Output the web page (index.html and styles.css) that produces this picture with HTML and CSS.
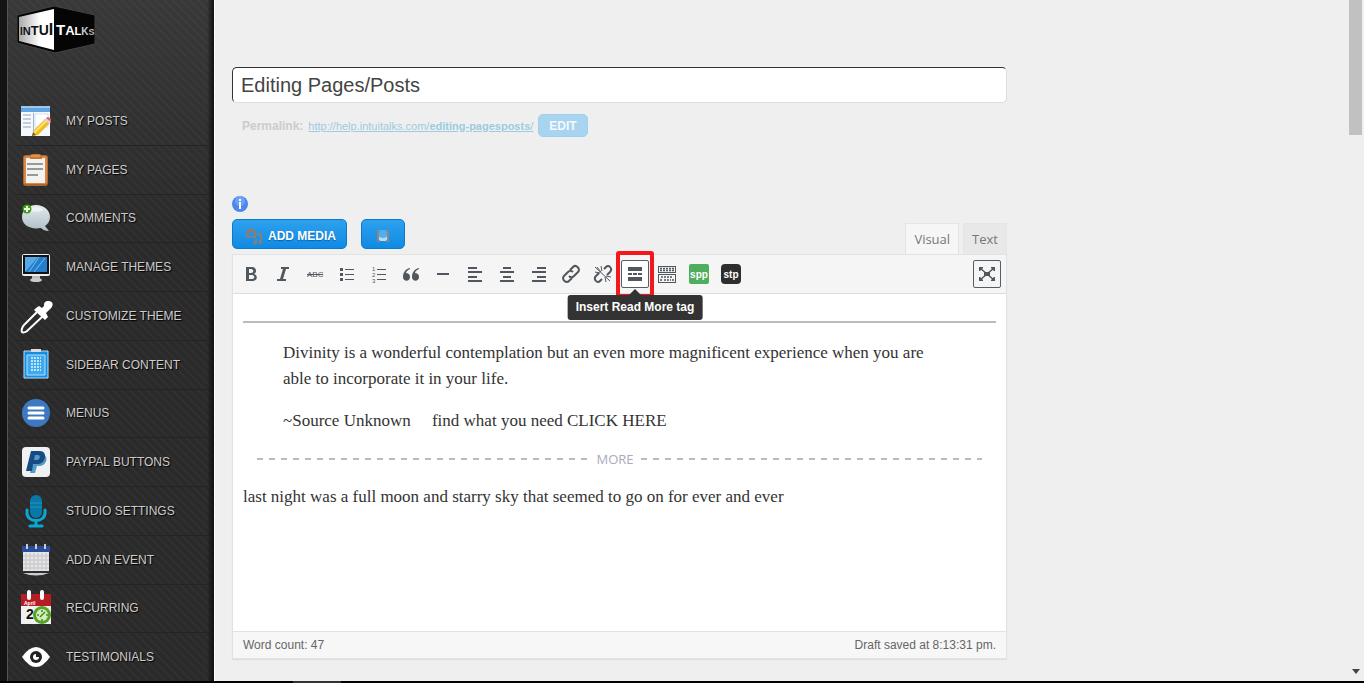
FILE: index.html
```html
<!DOCTYPE html>
<html lang="en">
<head>
<meta charset="utf-8">
<title>Editing Pages/Posts</title>
<link rel="stylesheet" href="styles.css">
</head>
<body>
<div class="app">
  <aside class="sidebar">
    <a class="logo" href="#" aria-label="IntuiTalks">
      <svg width="78" height="48" viewBox="0 0 78 48">
        <defs><linearGradient id="face"><stop stop-color="#aaa"/><stop offset=".6" stop-color="#fff"/></linearGradient></defs>
        <path d="M0 9 37 0 78 9V38L38 47 0 37Z" fill="#050505" stroke="#444" stroke-width="1"/>
        <path d="M2 11 37 3V44L2 35Z" fill="url(#face)"/>
        <text class="logo-text" x="3" y="29" fill="#111"><tspan font-size="10">I</tspan><tspan font-size="11">N</tspan><tspan font-size="13">T</tspan><tspan font-size="14">U</tspan><tspan font-size="16">I</tspan></text>
        <text class="logo-text" x="39" y="29" fill="#fff"><tspan font-size="15">T</tspan><tspan font-size="13">A</tspan><tspan font-size="11">L</tspan><tspan font-size="10" fill="#ccc">K</tspan><tspan font-size="9" fill="#bbb">S</tspan></text>
      </svg>
    </a>
    <nav class="menu">
      <a href="#"><svg viewBox="0 0 32 32"><path d="M1 1h29v30H1z" fill="#f5f9fd"/><path d="M1 1h29v6H1z" fill="#62a5e0"/><path d="M1 1h29v2H1z" fill="#9bcaf0"/><path d="M13 8h1v22h-1z" fill="#9bb6ce"/><path d="M15 9h13v13H15z" fill="#fff" stroke="#d5e1ec"/><path d="M3 10h8M3 14h8M3 18h8M3 22h8" stroke="#8ea2b5"/><path d="m12 31 2-6L25 14l5 4-12 12z" fill="#f1bd23"/><path d="m14 28 13-13" stroke="#ffe36b" stroke-width="2"/><path d="m24 15 2-2 5 4-2 2z" fill="#d5d5d5"/><path d="m26 13 2-1 3 2v3z" fill="#e8596a"/><path d="m12 31 1-4 3 3z" fill="#775a2c"/></svg>MY POSTS</a>
      <a href="#"><svg viewBox="0 0 32 32"><rect x="3" y="1" width="25" height="31" rx="3" fill="#b26529"/><rect x="4" y="2" width="23" height="28" rx="2" fill="#d5884a"/><path d="M6 4h19v25H6z" fill="#f2f2f0"/><path d="M10 3q0-3 3-3h5q4 0 4 3v2H10z" fill="#c9772f"/><path d="M11 2h9" stroke="#edb07a"/><path d="M7 10h16M7 15h16M7 21h11" stroke="#999" stroke-width="2"/></svg>MY PAGES</a>
      <a href="#"><svg viewBox="0 0 32 32"><defs><linearGradient id="bubble" x2="0" y2="1"><stop stop-color="#e3ebee"/><stop offset="1" stop-color="#aebdc5"/></linearGradient></defs><path d="M16 3c8 0 14 5 14 12 0 4-2 7-5 9l4 5c-4 0-6-1-8-3C10 28 2 23 2 15 2 8 8 3 16 3z" fill="url(#bubble)"/><path d="M7 8q9-6 17 0-8 4-17 0z" fill="#fff" opacity=".5"/><circle cx="7" cy="7" r="4.500" fill="#419d16"/><path d="M7 4v6M4 7h6" stroke="#eaffdc" stroke-width="2"/></svg>COMMENTS</a>
      <a href="#"><svg viewBox="0 0 32 32"><rect x="2" y="3" width="28" height="22" rx="2" fill="#eee"/><path d="M3 4h26v19H3z" fill="#111"/><path d="M5 6h22v15H5z" fill="#237fcb"/><path d="M5 6h13L6 20H5z" fill="#56aae7"/><path d="M19 6 9 21M25 7 14 21" stroke="#74bdee"/><path d="M12 25h8v3H12z" fill="#bbb"/><ellipse cx="16" cy="29" rx="6" ry="2" fill="#ccc"/></svg>MANAGE THEMES</a>
      <a href="#"><svg viewBox="0 0 32 32"><path d="M18 11 4 25c-2 2-3 6-2 7s5 0 6-2l15-14" fill="none" stroke="#fff" stroke-width="2"/><path d="m16 8 3-2 3 2 5-5c4-4 8 1 4 5l-5 5 2 4-3 3L14 10z" fill="#fff"/><circle cx="28" cy="5" r="4" fill="#fff"/></svg>CUSTOMIZE THEME</a>
      <a href="#"><svg viewBox="0 0 32 32"><path d="M4 2h24v27H4z" fill="#168de1"/><path d="M4 2h24v27H4z" fill="none" stroke="#b4e3fc" stroke-width="1"/><path d="M7 6h18v20H7z" fill="#42a8ed" stroke="#b4e3fc"/><path d="M11 9h10M11 12h10M11 15h10M11 18h10M11 21h10" stroke="#b9e7ff" stroke-width="2" stroke-dasharray="2 1"/><path d="M11 0h10v3H11z" fill="#ddd"/></svg>SIDEBAR CONTENT</a>
      <a href="#"><svg viewBox="0 0 32 32"><circle cx="16" cy="16" r="14" fill="#3d78c2"/><path d="M9 11h14M9 16h14M9 21h14" stroke="#fff" stroke-width="3" stroke-linecap="round"/></svg>MENUS</a>
      <a href="#"><svg viewBox="0 0 32 32"><rect x="2" y="1" width="28" height="30" rx="4" fill="#f0f1f2"/><path d="M14 9h10c5 2 2 11-4 11h-3l-2 7h-5l1-3z" fill="#559bc8"/><path fill-rule="evenodd" d="M11 5h9c8 0 6 13-2 13h-5l-1 7H6zm4 4-1 5h3c3 0 4-5 1-5z" fill="#164b83"/></svg>PAYPAL BUTTONS</a>
      <a href="#"><svg viewBox="0 0 32 32"><rect x="10" y="0" width="12" height="23" rx="6" fill="#0878a7"/><path d="M10 8h12M10 12h12" stroke="#2397bd"/><path d="M7 15v3c0 10 18 10 18 0v-3M16 26v5M10 31h12" fill="none" stroke="#09a9d5" stroke-width="3" stroke-linecap="round"/></svg>STUDIO SETTINGS</a>
      <a href="#"><svg viewBox="0 0 32 32"><path d="M3 3h26v24H3z" fill="#e5e5e5"/><path d="M2 2h28v6H2z" fill="#294ca0"/><path d="M7 0v5M16 0v5M25 0v5" stroke="#ccc" stroke-width="2"/><path d="M6 9v17M10 9v17M14 9v17M18 9v17M22 9v17M26 9v17M3 12h26M3 16h26M3 20h26M3 24h26" stroke="#c3c3c8"/><path d="M3 29h26q-13 5-26 0z" fill="#ccc"/></svg>ADD AN EVENT</a>
      <a href="#"><svg viewBox="0 0 32 32"><path d="M1 5h30v27H1z" fill="#f0f0f0"/><path d="M1 2h30v12H1z" fill="#b61d23"/><path d="M9 0v6M22 0v6" stroke="#fff" stroke-width="4" stroke-linecap="round"/><text class="cal-month" x="4" y="13">April</text><text class="cal-day" x="6" y="27">2</text><circle cx="22" cy="23" r="9" fill="#58a22a"/><circle cx="22" cy="23" r="6" fill="#d0edba"/><path d="m22 23 3-3M22 23l-2 2M22 18v2M22 27v2M17 23h2M26 23h2" stroke="#498925" stroke-width="1.500"/></svg>RECURRING</a>
      <a href="#"><svg viewBox="0 0 32 32"><path d="M2 16Q9 6 16 6t14 10q-7 10-14 10T2 16z" fill="#fff"/><circle cx="16" cy="16" r="6" fill="#222"/><circle cx="16" cy="16" r="3" fill="#fff"/><path d="M16 16v-4h4v4z" fill="#222"/></svg>TESTIMONIALS</a>
    </nav>
  </aside>

  <main class="content">
    <input class="title" type="text" aria-label="Title" value="Editing Pages/Posts">
    <div class="permalink"><strong>Permalink:</strong> <a href="#">http://help.intuitalks.com/<b>editing-pagesposts</b>/</a> <button class="edit" type="button">EDIT</button></div>

    <section class="editor">
      <svg class="info" viewBox="0 0 16 16"><circle cx="8" cy="8" r="8" fill="#4c86ef"/><circle cx="8" cy="5" r="5" fill="#89b3fa" opacity=".6"/><path d="M7 3h2v2H7zM7 6h2v7H7z" fill="#fff"/></svg>
      <div class="media-row">
        <div class="media-buttons">
          <button class="blue" type="button"><svg width="18" height="18" viewBox="0 0 18 18" fill="#808080"><path fill-rule="evenodd" d="M1 3h2l1-2h4l1 2h2v8H1zM6 4.500a2.500 2.500 0 1 0 .01 0z"/><path d="M12 6h5v9a2 2 0 1 1-2-2V9h-3v7a2 2 0 1 1-2-2v-2h2z"/></svg>ADD MEDIA</button>
          <button class="blue small" type="button" aria-label="Add form"><svg width="14" height="14" viewBox="0 0 14 14"><path d="M2 1h10v10H2z" fill="#4db0f0"/><path d="M2 7q5 4 10 0v5H2z" fill="#b4dcf8"/><path d="M4 2H2v10h2M10 2h2v10h-2" fill="none" stroke="#888" stroke-width="2"/></svg></button>
        </div>
        <div class="tabs"><button class="tab current" type="button">Visual</button><button class="tab" type="button">Text</button></div>
      </div>
      <div class="panel">
        <div class="toolbar">
          <button type="button" aria-label="Bold"><svg viewBox="0 0 20 20"><path fill-rule="evenodd" d="M5 3h6c5 0 5 6 2 7 4 1 4 7-2 7H5zm3 2v4h2c3 0 3-4 0-4zm0 6v4h3c3 0 3-4 0-4z"/></svg></button>
          <button type="button" aria-label="Italic"><svg viewBox="0 0 20 20"><path d="M8 3h8v2h-3l-3 10h3v2H4v-2h3l3-10H8z"/></svg></button>
          <button type="button" aria-label="Strikethrough"><svg viewBox="0 0 20 20"><text class="abc" x="2" y="13">ABC</text><path d="M2 10h16v1H2z"/></svg></button>
          <button type="button" aria-label="Bulleted list"><svg viewBox="0 0 20 20"><path d="M3 4h3v3H3zM3 9h3v3H3zM3 14h3v3H3zM8 5h9v1H8zM8 10h9v1H8zM8 15h9v1H8z"/></svg></button>
          <button type="button" aria-label="Numbered list"><svg viewBox="0 0 20 20"><path d="M8 5h9v1H8zM8 10h9v1H8zM8 15h9v1H8z"/><g class="nums"><text x="3" y="7">1</text><text x="3" y="13">2</text><text x="3" y="19">3</text></g></svg></button>
          <button type="button" aria-label="Quote"><svg viewBox="0 0 20 20"><path d="M9 4C4 5 2 9 2 13c0 5 7 5 7 0 0-3-2-4-4-4 0-2 2-3 4-4zM18 4c-5 1-7 5-7 9 0 5 7 5 7 0 0-3-2-4-4-4 0-2 2-3 4-4z"/></svg></button>
          <button type="button" aria-label="Horizontal line"><svg viewBox="0 0 20 20"><path d="M4 9h12v2H4z"/></svg></button>
          <button type="button" aria-label="Align left"><svg viewBox="0 0 20 20"><path d="M3 3h9v2H3zM3 7h14v2H3zM3 12h9v2H3zM3 16h14v2H3z"/></svg></button>
          <button type="button" aria-label="Align center"><svg viewBox="0 0 20 20"><path d="M6 3h8v2H6zM3 7h14v2H3zM6 12h8v2H6zM3 16h14v2H3z"/></svg></button>
          <button type="button" aria-label="Align right"><svg viewBox="0 0 20 20"><path d="M8 3h9v2H8zM3 7h14v2H3zM8 12h9v2H8zM3 16h14v2H3z"/></svg></button>
          <button type="button" aria-label="Insert link"><svg viewBox="0 0 20 20"><g class="line"><path d="m9 6 3-3c3-3 8 2 5 5l-4 4c-2 2-4 1-5 0M11 14l-3 3c-3 3-8-2-5-5l4-4c2-2 4-1 5 0"/></g></svg></button>
          <button type="button" aria-label="Remove link"><svg viewBox="0 0 20 20"><g class="line"><path d="m11 5 2-2c3-3 7 2 4 5l-3 3M9 15l-2 2c-3 3-7-2-4-5l3-3"/></g><path d="m2 3 15 14M8 2l1 5M2 8l5 1M12 13l1 5M13 12l5 1M4 3l4 5" fill="none" stroke="#50575e"/></svg></button>
          <div class="marked">
            <button class="active" type="button" aria-label="Insert Read More tag"><svg viewBox="0 0 20 20"><path d="M3 3h14v4H3zM3 9h4v2H3zM8 9h4v2H8zM13 9h4v2h-4zM3 13h14v4H3z"/></svg></button>
            <div class="tooltip" role="tooltip">Insert Read More tag</div>
          </div>
          <button type="button" aria-label="Toolbar toggle"><svg viewBox="0 0 20 20"><path fill-rule="evenodd" d="M1 2h18v7H1zm1 1v5h16V3zM1 10h18v9H1zm1 1v7h16v-7z"/><path d="M3 4.500h14M3 6.500h14M4 13h12M3 16h3M7 16h7M15 16h2" fill="none" stroke="#50575e" stroke-width="1.500" stroke-dasharray="2 1"/></svg></button>
          <button class="plugin" type="button"><span class="badge green">spp</span></button>
          <button class="plugin" type="button"><span class="badge">stp</span></button>
          <button class="active full" type="button" aria-label="Fullscreen"><svg viewBox="0 0 20 20"><path d="M7 8h6v4H7zM2 3h4v1L3 7H2zM14 3h4v4h-1l-3-3zM2 13h1l3 3v1H2zM17 13h1v4h-4v-1z"/><path d="m3 4 14 12M17 4 3 16" fill="none" stroke="#50575e" stroke-width="1.500"/></svg></button>
        </div>
        <article class="document">
          <hr>
          <blockquote>
            <p>Divinity is a wonderful contemplation but an even more magnificent experience when you are able to incorporate it in your life.</p>
            <p>~Source Unknown &nbsp; &nbsp; find what you need CLICK HERE</p>
          </blockquote>
          <div class="more"><span>MORE</span></div>
          <p>last night was a full moon and starry sky that seemed to go on for ever and ever</p>
        </article>
        <footer class="status"><span>Word count: 47</span><span>Draft saved at 8:13:31 pm.</span></footer>
      </div>
    </section>
  </main>
  <div class="scrollbar"><div class="thumb"></div><svg width="8" height="5" viewBox="0 0 8 5"><path d="M0 0h8L4 5z" fill="#444"/></svg></div>
</div>
<div class="taskbar"><div class="task"></div></div>
</body>
</html>
```
FILE: styles.css
```css
* { box-sizing: border-box; }
body {
  margin: 0;
  min-height: 100vh;
  display: flex;
  flex-direction: column;
  background: #efefef;
  color: #444;
  font: 12px/18px "Liberation Sans", Arial, sans-serif;
}
button { font: inherit; cursor: pointer; }
.app { flex: 1; display: flex; }

.sidebar {
  flex: none;
  width: 215px;
  display: flex;
  flex-direction: column;
  padding: 6px 6px 0 10px;
  border-left: 7px solid #151315;
  border-right: 1px solid #fff;
  background:
    linear-gradient(90deg, #555 1px, transparent 1px, transparent 200px, #111 207px),
    linear-gradient(#fff1, transparent 240px),
    repeating-linear-gradient(45deg, #2a2a2a 0 3px, #303030 4px 5px, #2a2a2a 6px);
}
.logo { height: 91px; }
.logo-text { font-family: "Liberation Sans", Arial, sans-serif; font-weight: bold; }
.menu { flex: 1; display: flex; flex-direction: column; }
.menu a {
  flex: 1;
  min-height: 40px;
  display: flex;
  align-items: center;
  gap: 14px;
  padding-left: 3px;
  border-bottom: 1px solid #242424;
  color: #ccc;
  text-decoration: none;
  text-shadow: 1px 1px 1px #000;
}
.menu a:last-child { border-bottom: 0; }
.menu svg { width: 32px; height: 32px; overflow: visible; text-shadow: none; }
.cal-month { font-size: 5px; font-weight: bold; fill: #fff; }
.cal-day { font-size: 14px; font-weight: bold; fill: #111; }

.content { flex: 1; min-width: 0; padding: 67px 342px 22px 17px; }
.title {
  display: block;
  width: 100%;
  height: 36px;
  padding: 0 8px;
  border: 1px solid #ddd;
  border-top-color: #333;
  border-left-color: #333;
  border-radius: 5px;
  background: #fff;
  color: #444;
  font: 20px "Liberation Sans", Arial, sans-serif;
}
.permalink {
  display: flex;
  align-items: center;
  gap: 5px;
  padding: 11px 10px 0;
  color: #ccc;
}
.permalink a { color: #9dcbe0; font-size: 11px; }
.edit {
  height: 23px;
  padding: 0 10px;
  border: 1px solid #9fd0ee;
  border-radius: 5px;
  background: #a9d4ef;
  color: #f4faff;
  font-weight: bold;
}

.editor { padding-top: 59px; }
.info { display: block; width: 16px; height: 16px; }
.media-row { display: flex; justify-content: space-between; height: 42px; }
.media-buttons { display: flex; gap: 14px; padding-top: 7px; }
.blue {
  display: flex;
  align-items: center;
  gap: 5px;
  height: 30px;
  padding: 4px 10px 0 12px;
  border: 1px solid #0b79cc;
  border-radius: 5px;
  background: linear-gradient(#2ea1ee, #0f8ae4);
  color: #fff;
  font-weight: bold;
  text-shadow: 0 1px 1px #0664ab;
}
.blue svg { flex: none; }
.small { padding: 4px 14px 0; }
.tabs { display: flex; align-items: flex-end; gap: 4px; }
.tab {
  height: 31px;
  padding: 0 8px;
  border: 1px solid #e5e5e5;
  border-bottom: 0;
  background: #e8e8e8;
  color: #777;
  font: 13px "Open Sans", sans-serif;
}
.current { background: #f6f6f6; }

.panel { border: 1px solid #e2e2e2; background: #fff; box-shadow: 0 1px 1px #0001; }
.toolbar {
  display: flex;
  align-items: center;
  gap: 4px;
  height: 39px;
  padding: 0 5px 0 4px;
  border-bottom: 1px solid #ddd;
  background: #f5f5f5;
}
.toolbar button {
  flex: none;
  display: grid;
  place-items: center;
  width: 28px;
  height: 28px;
  padding: 0;
  border: 1px solid transparent;
  border-radius: 2px;
  background: none;
}
.toolbar svg { width: 20px; height: 20px; fill: #50575e; }
.toolbar .active { border-color: #555d66; background: #fff; }
.toolbar .full { margin-left: auto; background: #f5f5f5; }
.line { fill: none; stroke: #50575e; stroke-width: 2; }
.abc { font-size: 8px; }
.nums { font-size: 6px; }
.marked { position: relative; }
.marked::before {
  content: "";
  position: absolute;
  inset: -9px -5px -10px;
  border: 4px solid #f4171c;
  border-radius: 3px;
}
.marked::after {
  content: "";
  position: absolute;
  left: 8px;
  top: 29px;
  border: 6px solid transparent;
  border-top: 0;
  border-bottom-color: #333;
}
.tooltip {
  position: absolute;
  top: 35px;
  left: 50%;
  transform: translateX(-50%);
  padding: 4px 8px;
  border-radius: 3px;
  background: #333;
  color: #fff;
  font-weight: bold;
  line-height: 17px;
  white-space: nowrap;
}
.badge {
  display: grid;
  place-items: center;
  width: 20px;
  height: 20px;
  border-radius: 4px;
  background: #2e2e2e;
  color: #fff;
  font: bold 10px "Liberation Sans", sans-serif;
}
.green { border-radius: 2px; background: #4fae5b; }

.document {
  min-height: 337px;
  padding: 27px 10px 0;
  color: #333;
  font: 17px/26px "Liberation Serif", Georgia, serif;
}
.document hr { margin: 0 0 17px; border: 0; border-top: 2px solid #bbb; }
.document p { margin: 0 0 16px; }
.document blockquote { margin: 0 40px; }
.document blockquote p:last-child { margin-bottom: 14px; }
.more {
  display: flex;
  align-items: center;
  gap: 7px;
  margin: 0 14px;
  padding-bottom: 14px;
  color: #aab;
  font: 13px/22px "Open Sans", sans-serif;
}
.more::before, .more::after {
  content: "";
  flex: 333;
  height: 2px;
  background: repeating-linear-gradient(90deg, #bbb 0 6px, transparent 6px 12px);
}
.more::after { flex: 342; }
.status {
  display: flex;
  justify-content: space-between;
  padding: 4px 10px;
  border-top: 1px solid #e2e2e2;
  background: #f7f7f7;
  color: #666;
}

.scrollbar {
  flex: none;
  width: 15px;
  display: flex;
  flex-direction: column;
  justify-content: space-between;
  padding: 0 2px 7px 0;
}
.scrollbar svg { align-self: center; }
.thumb { height: 135px; background: #c1c1c1; }
.taskbar { height: 2px; padding-left: 293px; background: #000; }
.task { width: 48px; height: 2px; background: #333; }
```
